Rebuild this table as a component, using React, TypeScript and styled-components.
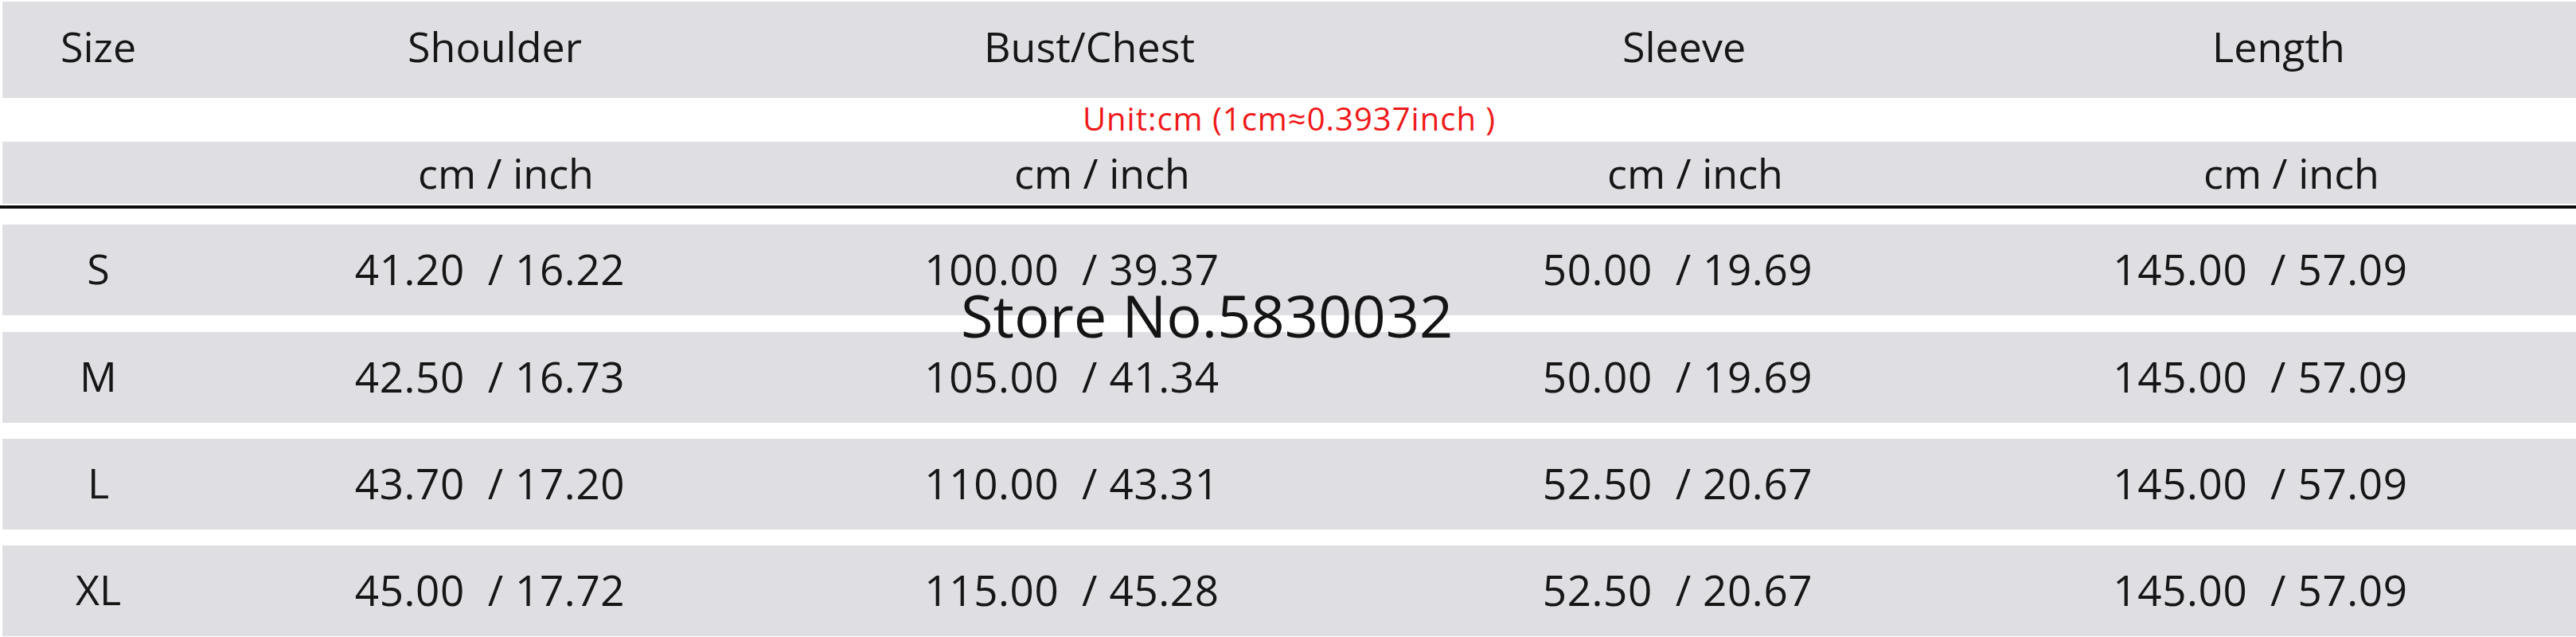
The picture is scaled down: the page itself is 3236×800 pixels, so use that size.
import React from "react";
import styled, { createGlobalStyle } from "styled-components";

const Global = createGlobalStyle`
  html, body { margin: 0; padding: 0; background: #ffffff; }
  body { font-family: "Open Sans", "Noto Sans", sans-serif; color: #161616; }
`;

const Page = styled.div`
  position: relative;
  width: 3236px;
  height: 800px;
  overflow: hidden;
  padding: 2px 0 0 3px;
  box-sizing: border-box;
  display: flex;
  flex-direction: column;
`;

const GridRow = styled.div<{ $h: number; $gray?: boolean; $mt?: number }>`
  display: grid;
  grid-template-columns: 245px repeat(4, 1fr);
  height: ${(p) => p.$h}px;
  flex: 0 0 auto;
  margin-top: ${(p) => p.$mt ?? 0}px;
  background: ${(p) => (p.$gray ? "#dfdfe3" : "transparent")};
`;

const Cell = styled.div<{ $shift?: number; $lift?: number; $size?: number; $track?: number }>`
  display: flex;
  align-items: center;
  justify-content: center;
  font-size: ${(p) => p.$size ?? 52}px;
  letter-spacing: ${(p) => p.$track ?? 0}px;
  line-height: 1;
  white-space: pre;
  padding-left: ${(p) => Math.max(0, (p.$shift ?? 0) * 2)}px;
  padding-right: ${(p) => Math.max(0, -(p.$shift ?? 0) * 2)}px;
  padding-bottom: ${(p) => (p.$lift ?? 0) * 2}px;
`;

const UnitRow = styled.div`
  height: 55px;
  display: flex;
  align-items: center;
  justify-content: center;
  padding: 0 0 4px 0;
  box-sizing: border-box;
  font-size: 40px;
  letter-spacing: 1px;
  line-height: 1;
  color: #f01818;
  white-space: pre;
`;

const Rule = styled.div`
  height: 4px;
  margin-top: 2px;
  margin-left: -3px;
  background: #0c0c0c;
  flex: 0 0 auto;
`;

const Watermark = styled.div`
  position: absolute;
  left: 1207px;
  top: 359px;
  font-size: 74px;
  line-height: 1;
  color: #141414;
  white-space: pre;
`;

const headers = ["Size", "Shoulder", "Bust/Chest", "Sleeve", "Length"];

const rows = [
  ["S", "41.20  / 16.22", "100.00  / 39.37", "50.00  / 19.69", "145.00  / 57.09"],
  ["M", "42.50  / 16.73", "105.00  / 41.34", "50.00  / 19.69", "145.00  / 57.09"],
  ["L", "43.70  / 17.20", "110.00  / 43.31", "52.50  / 20.67", "145.00  / 57.09"],
  ["XL", "45.00  / 17.72", "115.00  / 45.28", "52.50  / 20.67", "145.00  / 57.09"],
];

const valueShift = [-2, -6, -22, -8, -23];
const unitShift = [0, 14, 16, 14, 16];

export default function App() {
  return (
    <>
      <Global />
      <Page>
        <GridRow $h={121} $gray>
          {headers.map((h, i) => (
            <Cell key={h} $lift={5} $shift={i === 0 ? -2 : 0}>
              {h}
            </Cell>
          ))}
        </GridRow>
        <UnitRow>Unit:cm (1cm≈0.3937inch )</UnitRow>
        <GridRow $h={78} $gray>
          {headers.map((h, i) => (
            <Cell key={h} $shift={unitShift[i]}>
              {i === 0 ? "" : "cm / inch"}
            </Cell>
          ))}
        </GridRow>
        <Rule />
        {rows.map((r, ri) => (
          <GridRow key={r[0]} $h={114} $gray $mt={ri === 1 ? 21 : 20}>
            {r.map((v, ci) => (
              <Cell
                key={ci}
                $lift={2}
                $shift={valueShift[ci]}
                $size={ci === 0 ? 52 : 53}
                $track={ci === 0 ? 0 : 0.6}
              >
                {v}
              </Cell>
            ))}
          </GridRow>
        ))}
        <Watermark>Store No.5830032</Watermark>
      </Page>
    </>
  );
}
